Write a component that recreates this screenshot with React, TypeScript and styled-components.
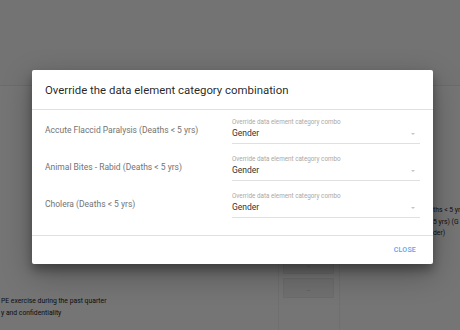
import React from "react";
import styled, { createGlobalStyle } from "styled-components";

const Global = createGlobalStyle`
  html, body { margin: 0; padding: 0; }
  body { font-family: Roboto, "Liberation Sans", Arial, sans-serif; background: #fff; }
`;

const Page = styled.div`
  position: relative;
  width: 460px;
  height: 330px;
  overflow: hidden;
  background: #ffffff;
`;

const Header = styled.div`
  height: 86px;
  background: #fbfbfb;
  border-bottom: 1px solid #ececec;
  box-sizing: border-box;
`;

const Body = styled.div`
  display: grid;
  grid-template-columns: 278px 62px 120px;
  height: 244px;
`;

const LeftCol = styled.div`
  display: flex;
  flex-direction: column;
  justify-content: flex-end;
  padding: 0 0 12px 1px;
  gap: 3px;
  overflow: hidden;
  white-space: nowrap;
`;

const BgText = styled.div`
  font-size: 6.8px;
  color: #1e1e1e;
  line-height: 9px;
`;

const MidCol = styled.div`
  border-left: 1px solid #f2f2f2;
  border-right: 1px solid #f2f2f2;
  padding: 168px 5px 0 4px;
  display: flex;
  flex-direction: column;
  gap: 4px;
`;

const BgBox = styled.div<{ $h: number }>`
  height: ${(p) => p.$h}px;
  background: #f3f3f3;
  border: 1px solid #ececec;
  display: flex;
  align-items: center;
  justify-content: center;
  font-size: 6px;
  color: #999;
`;

const RightCol = styled.div`
  padding: 120px 0 0 93px;
  display: flex;
  flex-direction: column;
  gap: 2.5px;
  white-space: nowrap;
`;

const Overlay = styled.div`
  position: absolute;
  inset: 0;
  background: rgba(0, 0, 0, 0.54);
  display: flex;
  align-items: flex-start;
  justify-content: flex-start;
  padding: 70px 0 0 32px;
  box-sizing: border-box;
`;

const Dialog = styled.div`
  width: 401px;
  background: #fff;
  border-radius: 2px;
  box-shadow: 0 10px 30px rgba(0, 0, 0, 0.3), 0 6px 10px rgba(0, 0, 0, 0.3);
  display: flex;
  flex-direction: column;
`;

const Title = styled.div`
  height: 40px;
  box-sizing: border-box;
  padding: 1px 13px 0;
  display: flex;
  align-items: center;
  font-size: 11.4px;
  color: rgba(0, 0, 0, 0.87);
  border-bottom: 1px solid #e0e0e0;
`;

const Content = styled.div`
  padding: 2px 13px 12px 13px;
  border-bottom: 1px solid #e0e0e0;
  display: flex;
  flex-direction: column;
`;

const Row = styled.div`
  display: grid;
  grid-template-columns: 187px 188px;
  height: 37px;
  align-items: center;
`;

const Label = styled.div`
  font-size: 8.5px;
  color: #737373;
  padding-bottom: 2px;
`;

const Select = styled.div`
  display: flex;
  flex-direction: column;
  border-bottom: 1px solid #e0e0e0;
  padding-bottom: 3px;
`;

const FloatLabel = styled.div`
  font-size: 6.3px;
  color: #a8a8a8;
  line-height: 8px;
`;

const ValueRow = styled.div`
  display: flex;
  align-items: center;
  justify-content: space-between;
  padding-right: 5px;
  margin-top: 1px;
`;

const Value = styled.div`
  font-size: 8.5px;
  color: #333;
  line-height: 13px;
`;

const Arrow = styled.div`
  width: 0;
  height: 0;
  border-left: 2.5px solid transparent;
  border-right: 2.5px solid transparent;
  border-top: 2.5px solid #c4c4c4;
  margin-top: 2px;
`;

const Footer = styled.div`
  height: 28px;
  display: flex;
  align-items: center;
  justify-content: flex-end;
  padding: 0 17px 0 0;
`;

const CloseButton = styled.button`
  background: none;
  border: none;
  padding: 0;
  font-family: Roboto, "Liberation Sans", Arial, sans-serif;
  font-size: 7px;
  font-weight: 500;
  letter-spacing: 0.2px;
  color: #5aa2f0;
  cursor: pointer;
`;

const rows = [
  "Accute Flaccid Paralysis (Deaths < 5 yrs)",
  "Animal Bites - Rabid (Deaths < 5 yrs)",
  "Cholera (Deaths < 5 yrs)",
];

export default function App() {
  return (
    <>
      <Global />
      <Page>
        <Header />
        <Body>
          <LeftCol>
            <BgText>PE exercise during the past quarter</BgText>
            <BgText>y and confidentiality</BgText>
          </LeftCol>
          <MidCol>
            <BgBox $h={18}>…</BgBox>
            <BgBox $h={18}>…</BgBox>
          </MidCol>
          <RightCol>
            <BgText>ths &lt; 5 yrs</BgText>
            <BgText>5 yrs) (G</BgText>
            <BgText>der)</BgText>
          </RightCol>
        </Body>
        <Overlay>
          <Dialog>
            <Title>Override the data element category combination</Title>
            <Content>
              {rows.map((r) => (
                <Row key={r}>
                  <Label>{r}</Label>
                  <Select>
                    <FloatLabel>Override data element category combo</FloatLabel>
                    <ValueRow>
                      <Value>Gender</Value>
                      <Arrow />
                    </ValueRow>
                  </Select>
                </Row>
              ))}
            </Content>
            <Footer>
              <CloseButton>CLOSE</CloseButton>
            </Footer>
          </Dialog>
        </Overlay>
      </Page>
    </>
  );
}
